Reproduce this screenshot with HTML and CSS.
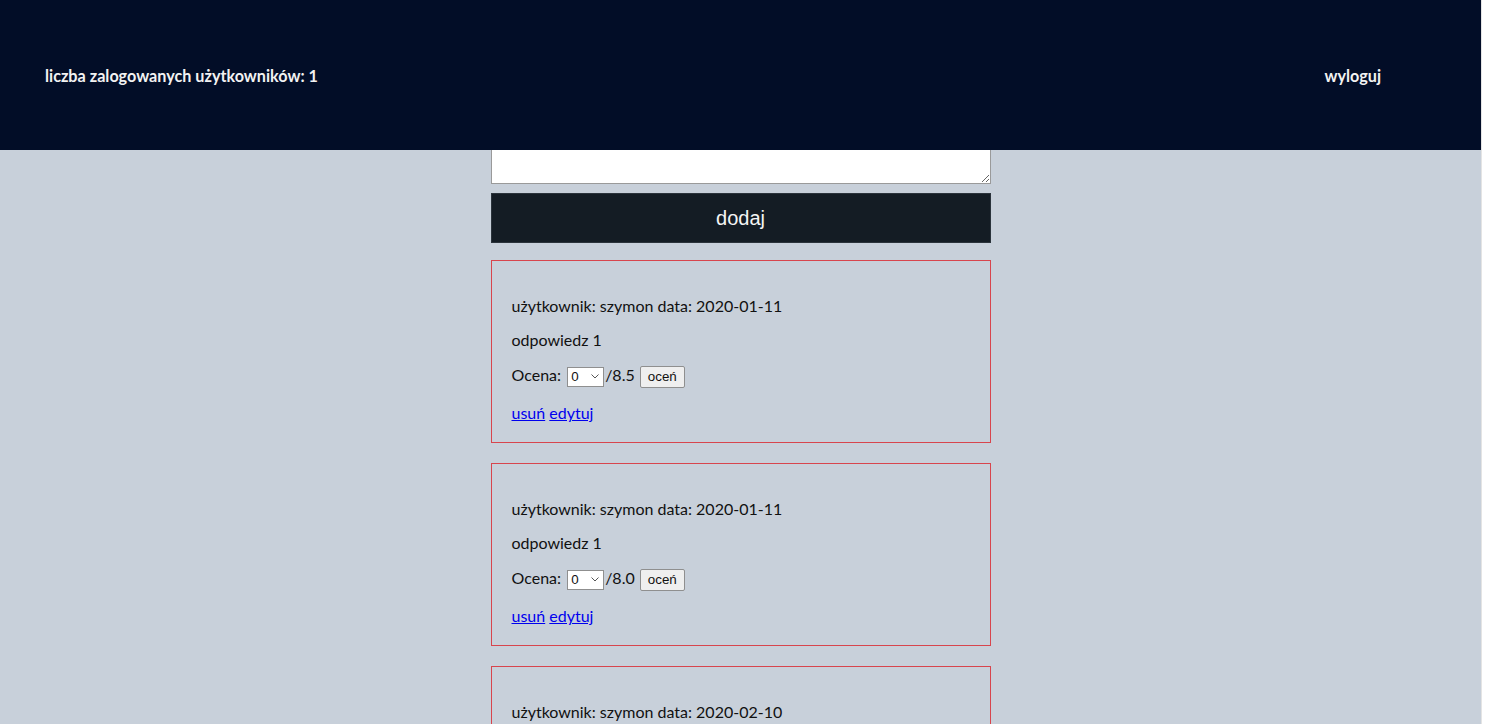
FILE: index.html
```html
<!DOCTYPE html>
<html lang="pl">
<head>
<meta charset="utf-8">
<title>Odpowiedzi</title>
<link rel="stylesheet" href="styles.css">
</head>
<body>
<div class="page">
  <header class="topbar">
    <span class="users">liczba zalogowanych użytkowników: 1</span>
    <a class="logout" href="#">wyloguj</a>
  </header>
  <main class="content">
    <form class="answer-form">
      <textarea class="answer-input"></textarea>
      <button type="button" class="add-btn">dodaj</button>
    </form>
    <div class="card">
      <p>użytkownik: szymon data: 2020-01-11</p>
      <p>odpowiedz 1</p>
      <p class="rating">Ocena: <select><option>0</option></select>/8.5 <button type="button">oceń</button></p>
      <p class="actions"><a href="#">usuń</a> <a href="#">edytuj</a></p>
    </div>
    <div class="card">
      <p>użytkownik: szymon data: 2020-01-11</p>
      <p>odpowiedz 1</p>
      <p class="rating">Ocena: <select><option>0</option></select>/8.0 <button type="button">oceń</button></p>
      <p class="actions"><a href="#">usuń</a> <a href="#">edytuj</a></p>
    </div>
    <div class="card">
      <p>użytkownik: szymon data: 2020-02-10</p>
    </div>
  </main>
</div>
</body>
</html>
```
FILE: styles.css
```css
html, body {
  margin: 0;
  padding: 0;
  height: 100%;
  overflow: hidden;
  background: #ffffff;
}
body {
  font-family: Lato, "DejaVu Sans", sans-serif;
  font-size: 16px;
  color: #111111;
}
.page {
  width: 1481px;
  min-height: 100%;
  background: #c8d0da;
  border-right: 1px solid #e4e4e4;
}
.topbar {
  position: fixed;
  top: 0;
  left: 0;
  width: 1481px;
  height: 150px;
  background: #020d27;
  color: #f2f2f2;
  font-weight: bold;
  font-size: 16.2px;
  display: flex;
  align-items: center;
  justify-content: space-between;
  padding: 0 100px 0 45px;
  box-sizing: border-box;
  z-index: 10;
}
.logout {
  color: #f2f2f2;
  text-decoration: none;
}
.content {
  width: 500px;
  margin: 0 auto;
  padding-top: 100px;
}
.answer-form {
  display: flex;
  flex-direction: column;
  gap: 9px;
  margin-bottom: 17px;
}
.answer-input {
  display: block;
  width: 500px;
  height: 84px;
  box-sizing: border-box;
  border: 1px solid #9a9a9a;
  background: #ffffff;
  margin: 0;
}
.add-btn {
  height: 50px;
  background: #141c24;
  color: #f4f4f4;
  border: 1px solid #2b333b;
  font-family: "Liberation Sans", Arial, sans-serif;
  font-size: 20px;
  cursor: pointer;
}
.card {
  border: 1px solid #d8454d;
  padding: 20px 20px 20px;
  margin-bottom: 20px;
}
.card p {
  margin: 16px 0 0;
  line-height: 18px;
}
.card p.rating {
  line-height: 22px;
  margin-top: 15px;
}
.card p.actions {
  margin-top: 16px;
}
.card a {
  color: #0000ee;
}
.rating select {
  -webkit-appearance: none;
  appearance: none;
  font-family: "Liberation Sans", Arial, sans-serif;
  font-size: 13.33px;
  color: #111;
  width: 37px;
  height: 20px;
  padding: 0 0 0 3px;
  margin: 0 1px 0 2px;
  border: 1px solid #8f8f8f;
  border-radius: 0;
  background-color: #ffffff;
  background-image: url("data:image/svg+xml;utf8,<svg xmlns='http://www.w3.org/2000/svg' width='8' height='5' viewBox='0 0 8 5'><path d='M0.5 0.5 L4 4 L7.5 0.5' fill='none' stroke='%23555' stroke-width='1'/></svg>");
  background-repeat: no-repeat;
  background-position: right 4px center;
  vertical-align: middle;
}
.rating button {
  font-family: "Liberation Sans", Arial, sans-serif;
  font-size: 13.33px;
  color: #111;
  width: 45px;
  height: 22px;
  padding: 0;
  margin-left: 1px;
  background: #efefef;
  border: 1px solid #8f8f8f;
  border-radius: 2px;
  vertical-align: middle;
}
```
